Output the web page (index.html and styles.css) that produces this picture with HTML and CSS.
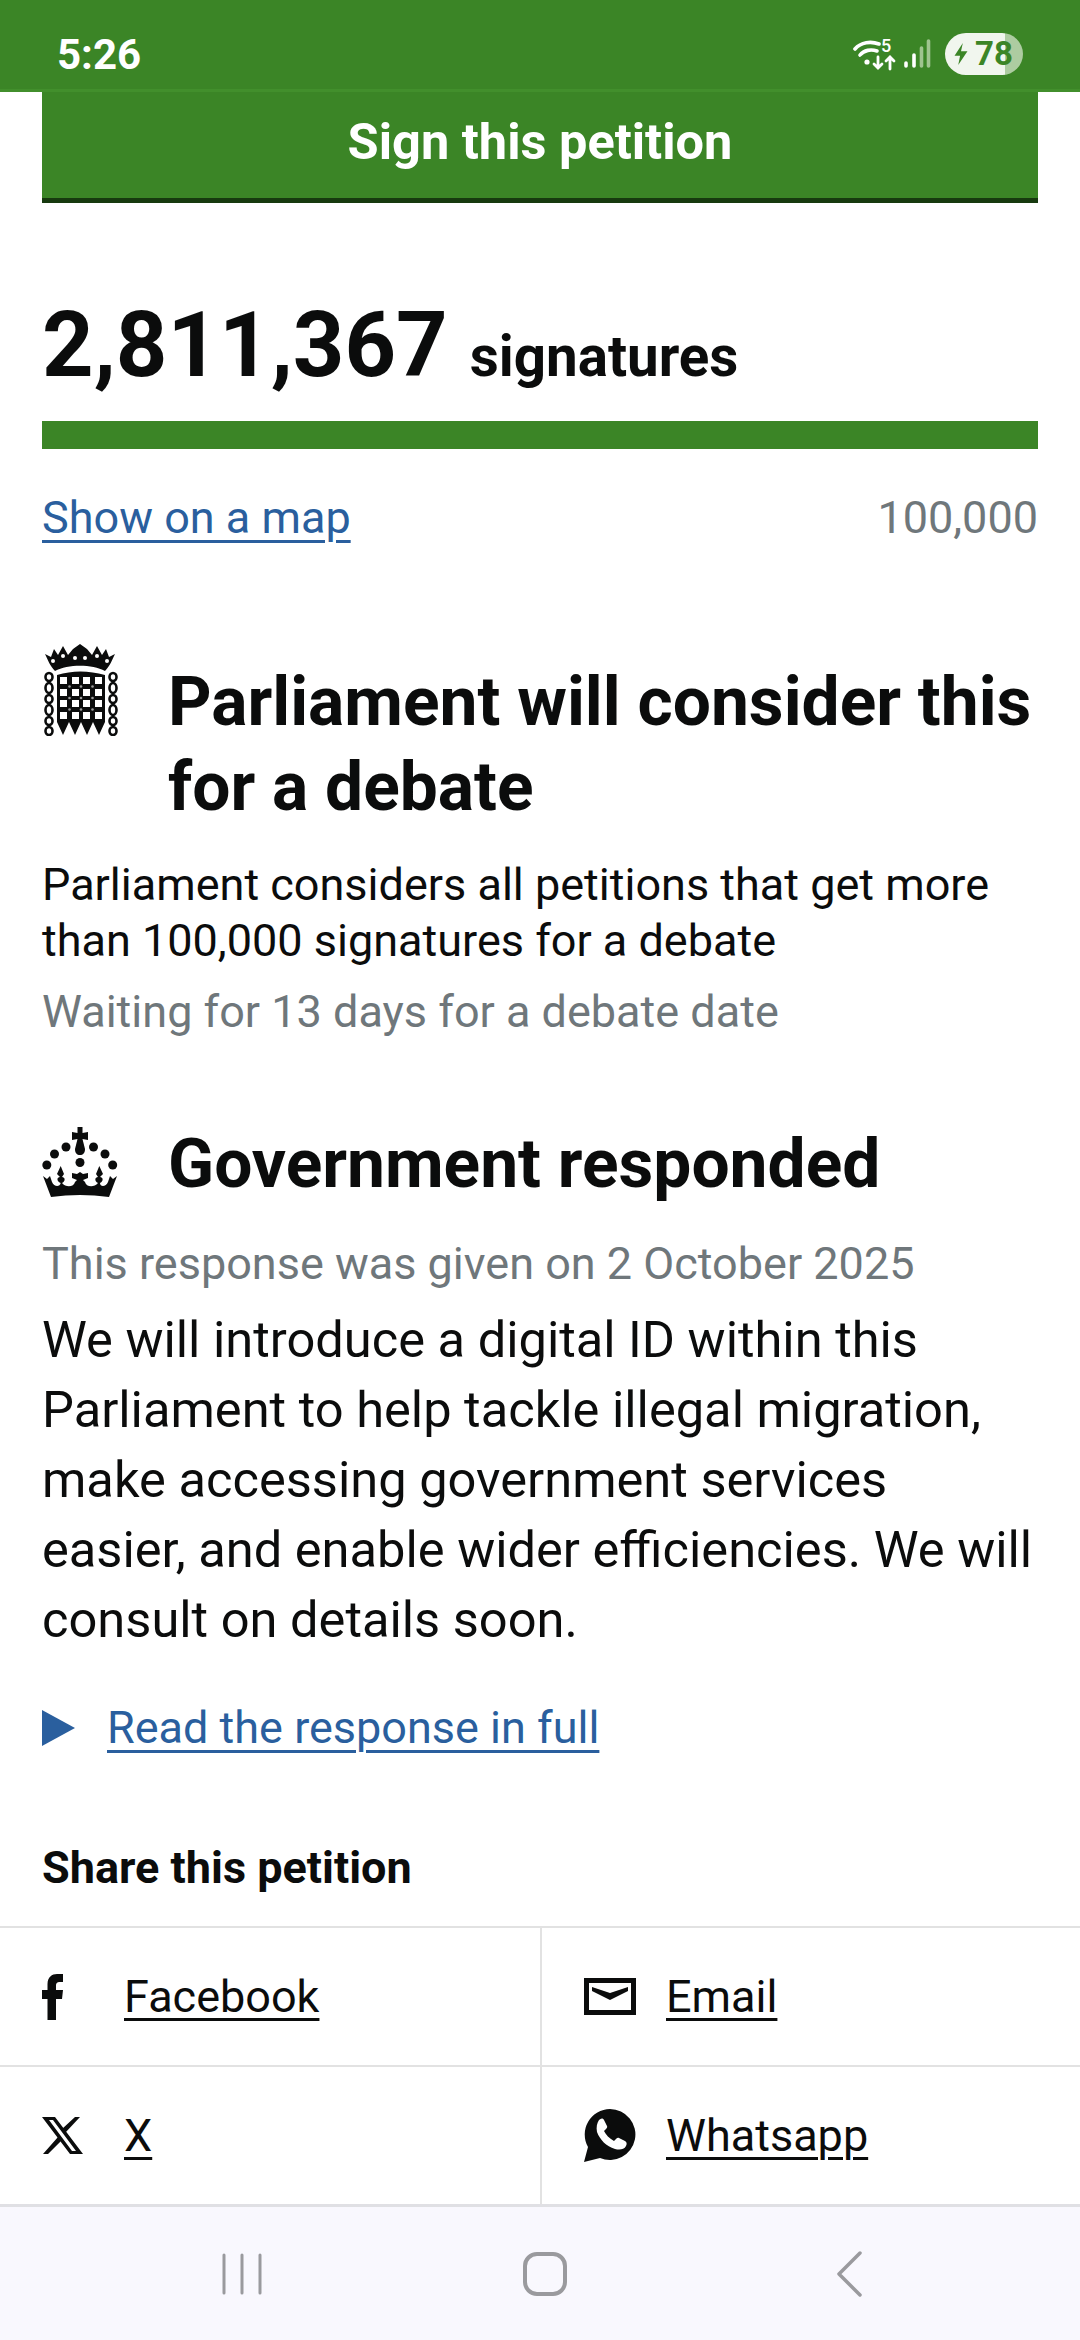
FILE: index.html
```html
<!DOCTYPE html>
<html lang="en">
<head>
<meta charset="utf-8">
<title>Petition</title>
<link rel="stylesheet" href="styles.css">
</head>
<body>
<div class="screen">
  <header class="status">
    <span class="time">5:26</span>
    <div class="status-icons">
      <svg class="wifi" width="44" height="34" viewBox="0 0 44 34" fill="none" stroke="#fff" stroke-linecap="round">
        <path d="M2 12C8 5 18 4 26 7" stroke-width="3.6"/>
        <path d="M7 18C11 13 18 12 24 14" stroke-width="3.6"/>
        <circle cx="14" cy="25" r="2.600" fill="#fff" stroke="none"/>
        <path d="M25 20V31M21 27l4 4 4-4" stroke-width="2.8"/>
        <path d="M37 32V20M33 24l4-4 4 4" stroke-width="2.8"/>
      </svg>
      <span class="wifi-5">5</span>
      <svg class="signal" width="28" height="30" viewBox="0 0 28 30" stroke-linecap="round" stroke-width="3.600" fill="none">
        <path d="M3 27v-3" stroke="#fff"/>
        <path d="M11 27V16" stroke="#fff"/>
        <path d="M18.500 27V9" stroke="#9fc48f"/>
        <path d="M25.500 27V2" stroke="#9fc48f"/>
      </svg>
      <div class="battery">
        <svg width="16" height="24" viewBox="0 0 16 26"><path d="M10 1 1 15h6l-2 10 10-15H8z" fill="#3b8526"/></svg>
        <span class="battery-num">78</span>
      </div>
    </div>
  </header>

  <main class="content">
    <div class="sign-btn">Sign this petition</div>

    <p class="count"><span class="count-num">2,811,367</span> <span class="count-label">signatures</span></p>
    <div class="progress"></div>
    <div class="progress-row">
      <a class="link">Show on a map</a>
      <span class="grey">100,000</span>
    </div>

    <section class="stage stage-parl">
      <svg class="emblem" width="76" height="92" viewBox="0 0 76 92">
        <g fill="#0b0c0c">
          <path d="M13 27C8 22 6 16 3 10L9 13 12 5 16 11 21 2 26 11 31 5 38 0 45 5 50 11 55 2 60 11 64 5 67 13 73 10C70 16 68 22 63 27 50 20 26 20 13 27Z"/>
          <path d="M15 31Q38 24 63 31V78L57 91 51 78 45 91 39 78 33 91 27 78 21 91 15 78Z"/>
        </g>
        <g fill="#fff">
          <circle cx="11" cy="17" r="2"/><circle cx="21" cy="12" r="2"/><circle cx="33" cy="14" r="2"/><circle cx="43" cy="14" r="2"/><circle cx="55" cy="12" r="2"/><circle cx="65" cy="17" r="2"/>
          <rect x="18" y="33" width="7" height="7"/><rect x="30" y="33" width="7" height="7"/><rect x="41" y="33" width="7" height="7"/><rect x="53" y="33" width="7" height="7"/>
          <rect x="18" y="45" width="7" height="7"/><rect x="30" y="45" width="7" height="7"/><rect x="41" y="45" width="7" height="7"/><rect x="53" y="45" width="7" height="7"/>
          <rect x="18" y="56" width="7" height="7"/><rect x="30" y="56" width="7" height="7"/><rect x="41" y="56" width="7" height="7"/><rect x="53" y="56" width="7" height="7"/>
          <rect x="18" y="68" width="7" height="7"/><rect x="30" y="68" width="7" height="7"/><rect x="41" y="68" width="7" height="7"/><rect x="53" y="68" width="7" height="7"/>
        </g>
        <g fill="#9a9a9a">
          <circle cx="27.500" cy="42.500" r="1.300"/><circle cx="39" cy="42.500" r="1.300"/><circle cx="50.500" cy="42.500" r="1.300"/>
          <circle cx="27.500" cy="54" r="1.300"/><circle cx="39" cy="54" r="1.300"/><circle cx="50.500" cy="54" r="1.300"/>
          <circle cx="27.500" cy="65.500" r="1.300"/><circle cx="39" cy="65.500" r="1.300"/><circle cx="50.500" cy="65.500" r="1.300"/>
        </g>
        <g fill="none" stroke="#0b0c0c" stroke-width="2.600">
          <ellipse cx="7" cy="33" rx="3.500" ry="4"/><ellipse cx="7" cy="44" rx="3.500" ry="5"/><ellipse cx="7" cy="55" rx="3.500" ry="4"/><ellipse cx="7" cy="66" rx="3.500" ry="5"/><ellipse cx="7" cy="77" rx="3.500" ry="4"/><ellipse cx="7" cy="87" rx="3.500" ry="4"/>
          <ellipse cx="71" cy="33" rx="3.500" ry="4"/><ellipse cx="71" cy="44" rx="3.500" ry="5"/><ellipse cx="71" cy="55" rx="3.500" ry="4"/><ellipse cx="71" cy="66" rx="3.500" ry="5"/><ellipse cx="71" cy="77" rx="3.500" ry="4"/><ellipse cx="71" cy="87" rx="3.500" ry="4"/>
        </g>
      </svg>
      <h2 class="stage-title">Parliament will consider this for a debate</h2>
    </section>
    <p class="note">Parliament considers all petitions that get more than 100,000 signatures for a debate</p>
    <p class="grey wait">Waiting for 13 days for a debate date</p>

    <section class="stage stage-gov">
      <svg class="emblem" width="76" height="72" viewBox="0 0 76 72">
        <g fill="#0b0c0c">
          <path d="M35.500 0h5v6l5.500-1v8l-5.500-1 2.500 10c0 4-2 6-5 6s-5-2-5-6l2.500-10-5.500 1V5l5.500 1z"/>
          <circle cx="24" cy="20" r="4.500"/><circle cx="51.500" cy="20" r="4.500"/>
          <circle cx="12.500" cy="27" r="4.500"/><circle cx="63" cy="27" r="4.500"/>
          <circle cx="4.800" cy="38" r="4.500"/><circle cx="70.700" cy="38" r="4.500"/>
          <circle cx="38" cy="35.500" r="4.500"/>
          <path d="M1 49 5 52 8 49 10 55C12 60 18 60 18.700 56 14 54 15 50 18 50L15 47 18.700 39 22 47 20 50C23 50 24 54 20 56 24 61 32 60 33 55L35 53 30 51V46L35 47 38 45 41 47 46 46V51L41 53 43 55C44 60 52 61 56 56 52 54 53 50 56 50L54 47 57.300 39 61 47 58 50C61 50 62 54 58 56 58 60 64 60 66 55L68 49 71 52 75 49 67 70Q38 66 9 70Z"/>
        </g>
      </svg>
      <h2 class="stage-title">Government responded</h2>
    </section>
    <p class="grey given">This response was given on 2 October 2025</p>
    <p class="response">We will introduce a digital ID within this Parliament to help tackle illegal migration, make accessing government services easier, and enable wider efficiencies. We will consult on details soon.</p>
    <div class="read-row">
      <svg width="33" height="36" viewBox="0 0 33 36"><path d="M0 0 33 18 0 36z" fill="#2a5f9e"/></svg>
      <a class="link">Read the response in full</a>
    </div>

    <h3 class="share-title">Share this petition</h3>
  </main>

  <div class="share-grid">
    <div class="share-cell">
      <span class="share-icon"><svg width="21" height="46" viewBox="0 0 21 46"><path d="M5.500 46V25H0v-9h5.500V10C5.500 3 10 0 15 0h6v8h-3c-3 0-4 1-4 4v4h7l-1 9h-6v21z" fill="#0b0c0c"/></svg></span>
      <a class="share-link">Facebook</a>
    </div>
    <div class="share-cell">
      <span class="share-icon"><svg width="52" height="37" viewBox="0 0 52 37"><rect x="2.500" y="2.500" width="47" height="32" fill="none" stroke="#0b0c0c" stroke-width="5"/><path d="M8 9l18 6 18-6v4l-18 9-18-9z" fill="#0b0c0c"/></svg></span>
      <a class="share-link">Email</a>
    </div>
    <div class="share-cell">
      <span class="share-icon"><svg class="x-mark" width="41" height="37" viewBox="0 0 41 37"><path d="M0 0h13l28 37H28zM7 3 30 34h4L11 3z" fill="#0b0c0c" fill-rule="evenodd"/><path d="M33 0h5L23 16l-3-4zM16 20l3 4L6 37H1z" fill="#0b0c0c"/></svg></span>
      <a class="share-link">X</a>
    </div>
    <div class="share-cell">
      <span class="share-icon"><svg width="52" height="53" viewBox="0 0 52 53"><path d="M26 0a25.500 25.500 0 1 1-10 49L0 53l4-15A25.500 25.500 0 0 1 26 0z" fill="#0b0c0c"/><path d="M15 11c2-2 4-2 5 0l3 6c.5 1 0 2-1 3l-2 2c2 4 5 7 10 10l2-2c1-1 2-1.500 3-1l6 3c2 1 2 3 1 5-2 4-7 4-11 3-9-3-15-9-18-17-1-5 0-9 2-12z" fill="#fff"/></svg></span>
      <a class="share-link">Whatsapp</a>
    </div>
  </div>

  <nav class="navbar">
    <svg width="40" height="42" viewBox="0 0 40 42" fill="none" stroke="#9a9a9e" stroke-width="3" stroke-linecap="round"><path d="M2 2v38M20 2v38M38 2v38"/></svg>
    <svg class="nav-home" width="44" height="44" viewBox="0 0 44 44" fill="none" stroke="#9a9a9e" stroke-width="4"><rect x="2" y="2" width="40" height="40" rx="12"/></svg>
    <svg class="nav-back" width="26" height="46" viewBox="0 0 26 46" fill="none" stroke="#9a9a9e" stroke-width="3.500" stroke-linecap="round" stroke-linejoin="round"><path d="M24 2 3 23l21 21"/></svg>
  </nav>
</div>
</body>
</html>
```

FILE: styles.css
```css
* { box-sizing: border-box; }
html, body { margin: 0; padding: 0; background: #fff; }
body { font-family: Roboto, "Liberation Sans", sans-serif; color: #0b0c0c; }
p, h2, h3 { margin: 0; }

.screen { width: 1080px; height: 2340px; display: flex; flex-direction: column; overflow: hidden; }

.status { height: 92px; flex: none; background: #3b8526; border-bottom: 3px solid #428f2c; display: flex; justify-content: space-between; align-items: center; padding: 20px 57px 0 57px; color: #fff; }
.time { font-size: 42px; font-weight: 700; }
.status-icons { display: flex; align-items: center; margin-top: -2px; }
.wifi-5 { font-size: 18px; font-weight: 500; margin-left: -16px; margin-top: -16px; width: 12px; }
.signal { margin-left: 10px; margin-right: 14px; }
.battery { width: 78px; height: 42px; border-radius: 21px; display: flex; align-items: center; gap: 6px; padding-left: 8px; color: #3b8526; background: linear-gradient(90deg, #f1f6ee 0 77%, #adcca1 77%); }
.battery-num { font-size: 33px; font-weight: 700; line-height: 1; }

.content { flex: 1; padding: 0 42px; min-height: 0; }

.sign-btn { height: 111px; background: #3b8526; border-bottom: 5px solid #173a0f; color: #fff; font-size: 50.500px; font-weight: 700; text-align: center; line-height: 100px; }

.count { margin-top: 100px; line-height: 86px; height: 86px; white-space: nowrap; }
.count-num { font-size: 90px; font-weight: 700; }
.count-label { font-size: 56.500px; font-weight: 700; margin-left: 18px; }

.progress { height: 28px; background: #3b8526; margin-top: 32px; }
.progress-row { display: flex; justify-content: space-between; align-items: center; margin-top: 39px; font-size: 45px; line-height: 60px; }
.link { color: #2a5f9e; text-decoration: underline; text-decoration-thickness: 3px; text-underline-offset: 7px; }
.grey { color: #6f777b; }

.stage { display: flex; gap: 50px; align-items: flex-start; }
.emblem { flex: none; }
.stage-title { font-size: 67.700px; line-height: 85px; font-weight: 700; }
.stage-parl { margin-top: 96px; }
.stage-parl .stage-title { padding-top: 16px; }
.note { font-size: 45px; line-height: 56px; margin-top: 27px; }
.wait { font-size: 45px; line-height: 56px; margin-top: 15px; }

.stage-gov { margin-top: 84px; align-items: center; }
.stage-gov .emblem { margin-top: -8px; }
.stage-gov .stage-title { padding-bottom: 5px; height: 85px; line-height: 80px; }
.given { font-size: 45px; line-height: 56px; margin-top: 27px; }
.response { font-size: 50.600px; line-height: 70px; margin-top: 13px; }
.read-row { display: flex; align-items: center; gap: 32px; margin-top: 43px; font-size: 45px; line-height: 60px; }

.share-title { font-size: 45px; font-weight: 700; line-height: 56px; margin-top: 82px; }

.share-grid { flex: none; display: grid; grid-template-columns: 542px 538px; grid-template-rows: 139px 137px; border-top: 2px solid #e2e2e2; }
.share-cell { display: flex; align-items: center; padding-left: 42px; font-size: 45px; }
.share-cell:nth-child(odd) { border-right: 2px solid #e2e2e2; }
.share-cell:nth-child(-n+2) { border-bottom: 2px solid #e2e2e2; }
.share-icon { width: 82px; flex: none; display: flex; align-items: center; }
.share-link { color: #0b0c0c; text-decoration: underline; text-decoration-thickness: 3px; text-underline-offset: 6px; }

.navbar { height: 136px; flex: none; background: #f9f8fe; border-top: 3px solid #e0e0e4; display: flex; align-items: center; padding-left: 222px; }
.nav-home { margin-left: 261px; }
.nav-back { margin-left: 269px; }
```
